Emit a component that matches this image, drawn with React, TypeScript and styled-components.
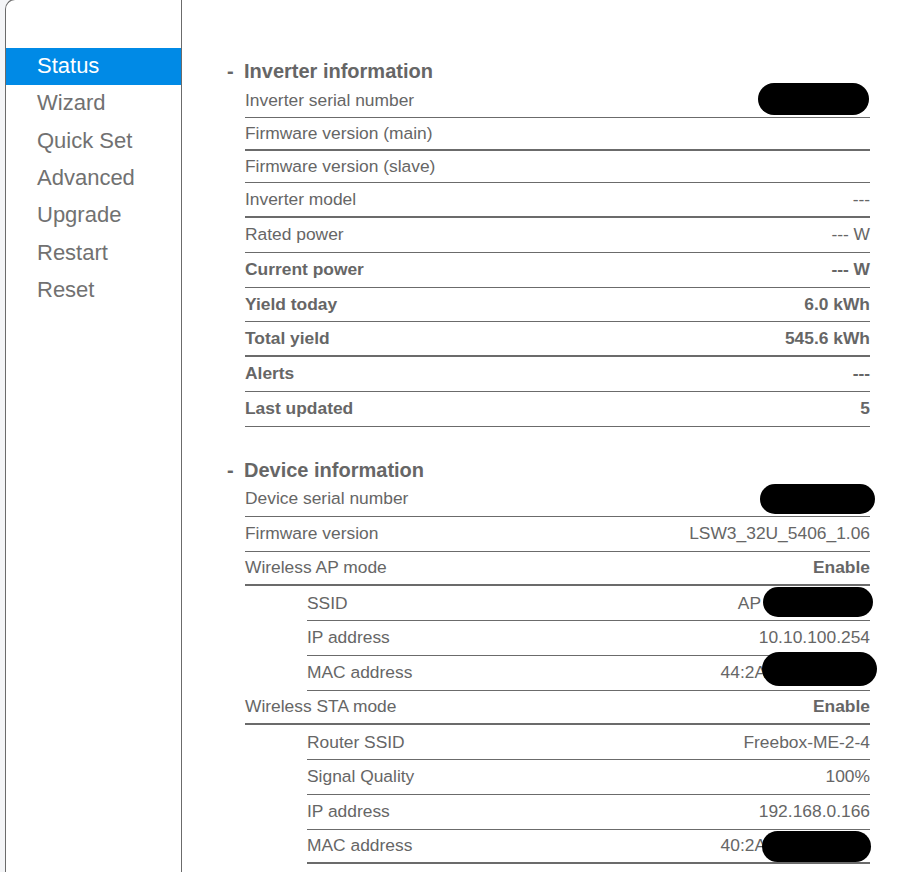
import { createGlobalStyle, styled } from "styled-components";

const color = {
  page: "#f4f5f7",
  white: "#ffffff",
  blue: "#008ae6",
  text: "#666666",
  menu: "#717171",
  line: "#6b6b6b",
  ink: "#000000",
};

type Redaction = {
  prefix?: string;
  w: number;
  h: number;
  ml?: number;
  mr?: number;
  dy?: number;
};

type RowData = {
  label: string;
  value?: string;
  bold?: boolean;
  boldValue?: boolean;
  short?: boolean;
  thick?: boolean;
  redact?: Redaction;
  children?: RowData[];
};

const Menu = [
  { id: "status", title: "Status" },
  { id: "wizard", title: "Wizard" },
  { id: "quick", title: "Quick Set" },
  { id: "advanced", title: "Advanced" },
  { id: "upgrade", title: "Upgrade" },
  { id: "restart", title: "Restart" },
  { id: "reset", title: "Reset" },
];

const inverterRows: RowData[] = [
  { label: "Inverter serial number", redact: { w: 111, h: 32, mr: 1, dy: -1 } },
  { label: "Firmware version (main)", short: true, thick: true },
  { label: "Firmware version (slave)", short: true },
  { label: "Inverter model", value: "---", thick: true },
  { label: "Rated power", value: "--- W" },
  { label: "Current power", value: "--- W", bold: true },
  { label: "Yield today", value: "6.0 kWh", bold: true },
  { label: "Total yield", value: "545.6 kWh", bold: true, thick: true },
  { label: "Alerts", value: "---", bold: true },
  { label: "Last updated", value: "5", bold: true },
];

const deviceRows: RowData[] = [
  { label: "Device serial number", redact: { w: 115, h: 30, mr: -5, dy: 0 } },
  { label: "Firmware version", value: "LSW3_32U_5406_1.06" },
  {
    label: "Wireless AP mode",
    value: "Enable",
    boldValue: true,
    thick: true,
    children: [
      { label: "SSID", redact: { prefix: "AP", w: 110, h: 30, ml: 2, mr: -3, dy: -1 } },
      { label: "IP address", value: "10.10.100.254" },
      { label: "MAC address", redact: { prefix: "44:2A", w: 115, h: 34, ml: -4, mr: -7, dy: -4 } },
    ],
  },
  {
    label: "Wireless STA mode",
    value: "Enable",
    boldValue: true,
    thick: true,
    children: [
      { label: "Router SSID", value: "Freebox-ME-2-4" },
      { label: "Signal Quality", value: "100%" },
      { label: "IP address", value: "192.168.0.166" },
      { label: "MAC address", thick: true, redact: { prefix: "40:2A", w: 109, h: 31, ml: -4, mr: -1, dy: 1 } },
    ],
  },
];

const GlobalStyle = createGlobalStyle`
  html, body {
    margin: 0;
    padding: 0;
    background: ${color.page};
  }
  body {
    font-family: "Liberation Sans", Arial, sans-serif;
  }
  * {
    box-sizing: border-box;
  }
`;

function Cell({ row }: { row: RowData }) {
  if (!row.redact) return <>{row.value}</>;
  const r = row.redact;
  return (
    <>
      {r.prefix}
      <Blob $w={r.w} $h={r.h} $ml={r.ml ?? 0} $mr={r.mr ?? 0} $dy={r.dy ?? 0} />
    </>
  );
}

function TableRow({ row }: { row: RowData }) {
  return (
    <>
      <Row $short={row.short} $thick={row.thick}>
        <Label $bold={row.bold}>{row.label}</Label>
        <Value $bold={row.bold || row.boldValue}>
          <Cell row={row} />
        </Value>
      </Row>
      {row.children && (
        <SubTable>
          {row.children.map((child, i) => (
            <Row key={child.label + i} $thick={child.thick}>
              <Label>{child.label}</Label>
              <Value>
                <Cell row={child} />
              </Value>
            </Row>
          ))}
        </SubTable>
      )}
    </>
  );
}

function Section({ title, rows }: { title: string; rows: RowData[] }) {
  return (
    <SectionBox>
      <Heading>
        <Dash>-</Dash>
        {title}
      </Heading>
      <Table>
        {rows.map((row) => (
          <TableRow key={row.label} row={row} />
        ))}
      </Table>
    </SectionBox>
  );
}

export default function App(): JSX.Element {
  return (
    <>
      <GlobalStyle />
      <Shell>
        <Frame>
          <Sidebar>
            {Menu.map((item, i) => (
              <MenuItem key={item.id} $active={i === 0}>
                {item.title}
              </MenuItem>
            ))}
          </Sidebar>
          <Main>
            <Section title="Inverter information" rows={inverterRows} />
            <Section title="Device information" rows={deviceRows} />
          </Main>
        </Frame>
      </Shell>
    </>
  );
}

const Shell = styled.div`
  height: 100vh;
  overflow: hidden;
  padding-left: 5px;
  background: ${color.page};
`;

const Frame = styled.div`
  display: flex;
  min-height: calc(100vh + 1px);
  margin-top: -1px;
  background: ${color.white};
  border-top: 1px solid ${color.line};
  border-left: 1px solid ${color.line};
  border-radius: 10px 0 0 0;
`;

const Sidebar = styled.nav`
  width: 176px;
  flex-shrink: 0;
  padding-top: 48px;
  border-right: 1px solid ${color.line};
`;

const MenuItem = styled.div<{ $active?: boolean }>`
  height: 37.33px;
  line-height: 35.33px;
  padding: 0 0 2px 31px;
  font-size: 22px;
  color: ${(p) => (p.$active ? color.white : color.menu)};
  background: ${(p) => (p.$active ? color.blue : "transparent")};
`;

const Main = styled.main`
  flex: 1;
  padding: 60px 30px 0 45px;
  color: ${color.text};
`;

const SectionBox = styled.section`
  margin-bottom: 32px;
`;

const Heading = styled.div`
  display: flex;
  align-items: center;
  height: 23.5px;
  font-size: 20px;
  font-weight: 700;
`;

const Dash = styled.span`
  width: 17px;
`;

const Table = styled.div`
  margin-left: 18px;
  display: flex;
  flex-direction: column;
`;

const SubTable = styled.div`
  margin-left: 62px;
  display: flex;
  flex-direction: column;
`;

const Row = styled.div<{ $short?: boolean; $thick?: boolean }>`
  display: flex;
  align-items: center;
  justify-content: space-between;
  flex-shrink: 0;
  height: ${(p) => (p.$short ? "32.5px" : "34.75px")};
  border-bottom: ${(p) => (p.$thick ? 2 : 1)}px solid ${color.line};
  font-size: 17.4px;
`;

const Label = styled.span<{ $bold?: boolean }>`
  font-weight: ${(p) => (p.$bold ? 700 : 400)};
  white-space: nowrap;
`;

const Value = styled.span<{ $bold?: boolean }>`
  display: flex;
  align-items: center;
  font-weight: ${(p) => (p.$bold ? 700 : 400)};
  white-space: nowrap;
`;

const Blob = styled.span<{ $w: number; $h: number; $ml: number; $mr: number; $dy: number }>`
  display: inline-block;
  position: relative;
  top: ${(p) => p.$dy}px;
  width: ${(p) => p.$w}px;
  height: ${(p) => p.$h}px;
  margin-left: ${(p) => p.$ml}px;
  margin-right: ${(p) => p.$mr}px;
  background: ${color.ink};
  border-radius: ${(p) => p.$h / 2}px;
`;
